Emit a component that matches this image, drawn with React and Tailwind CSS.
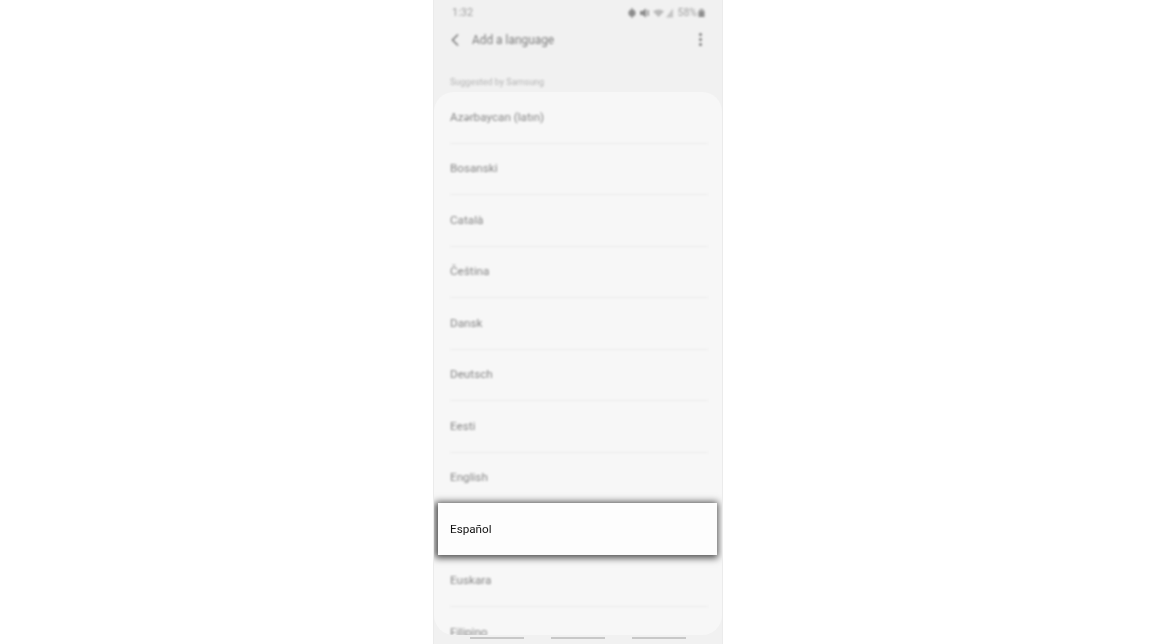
import React from "react";

const font = { fontFamily: '"Roboto","Liberation Sans",sans-serif' };
const before = ["Azərbaycan (latın)", "Bosanski", "Català", "Čeština", "Dansk", "Deutsch", "Eesti", "English"];

function Row({ label, last }) {
  return (
    <div className="h-[51.5px] flex flex-col shrink-0 blur-[0.85px]">
      <div className="flex-1 flex items-center pl-[16px] pt-[1px] text-[11.7px] text-[#868686]">{label}</div>
      {!last && <div className="ml-[16px] mr-[14px] h-px bg-[#ebebeb]" />}
    </div>
  );
}

export default function App() {
  return (
    <div className="w-[1156px] h-[644px] bg-white flex justify-center overflow-hidden" style={font}>
      <div className="w-[290px] h-[644px] bg-[#f1f1f1] flex flex-col overflow-hidden border-x border-[#ebebeb]">
        <div className="h-[25px] flex items-center justify-between pl-[18px] pr-[17px] pt-[1px] blur-[0.85px] shrink-0">
          <span className="text-[11px] text-[#a0a0a0]">1:32</span>
          <div className="flex items-center text-[#8c8c8c] -mt-[1px]">
            <svg width="46" height="10" viewBox="0 0 46 10" fill="currentColor" className="mr-[4px]">
              <circle cx="4" cy="5" r="3.600" />
              <rect x="3.400" y="0" width="1.200" height="10" />
              <path d="M12 3h2.500l3.500-2.500v9l-3.500-2.500H12z" />
              <path d="M20 2v6" stroke="currentColor" strokeWidth="1.500" />
              <path d="M25 3.500q6-4 11 0l-5.500 5.500z" opacity="0.55" />
              <path d="M45 0.500V9.500H38z" opacity="0.45" />
            </svg>
            <span className="text-[10.5px] text-[#a0a0a0]">58%</span>
            <svg width="7" height="9" viewBox="0 0 7 9" fill="currentColor" className="ml-[1px]">
              <rect x="0.500" y="3" width="6" height="6" />
              <path d="M2 3V1.500h3V3" fill="none" stroke="currentColor" />
            </svg>
          </div>
        </div>
        <div className="h-[30px] flex items-center pl-[16px] pr-[20px] pt-[1px] blur-[0.85px] shrink-0">
          <svg width="10" height="14" viewBox="0 0 10 14" fill="none" stroke="#7c7c7c" strokeWidth="1.600" className="-mt-[1px]">
            <path d="M8 1.500 2.500 7 8 12.500" />
          </svg>
          <span className="ml-[12px] text-[11.9px] text-[#7e7e7e]">Add a language</span>
          <div className="ml-auto flex flex-col gap-[2px] -mt-[2px]">
            <span className="w-[3px] h-[3px] rounded-full bg-[#7c7c7c]" />
            <span className="w-[3px] h-[3px] rounded-full bg-[#7c7c7c]" />
            <span className="w-[3px] h-[3px] rounded-full bg-[#7c7c7c]" />
          </div>
        </div>
        <div className="h-[37px] flex items-end pb-[3px] pl-[16px] text-[9px] text-[#b4b4b4] blur-[0.85px] shrink-0">Suggested by Samsung</div>
        <div className="flex-1 min-h-0 bg-[#f7f7f7] rounded-[20px] flex flex-col overflow-hidden">
          {before.map((l) => <Row key={l} label={l} />)}
          <div className="h-[52px] shrink-0 -mt-px ml-[4px] mr-[5px] bg-[#fdfdfd] flex items-center pl-[12px] pt-[1px] text-[11.7px] text-[#111] shadow-[-1px_1px_7px_2px_rgba(0,0,0,0.7)] relative z-10 blur-[0.3px]">Español</div>
          <Row label="Euskara" />
          <Row label="Filipino" last />
        </div>
        <div className="h-[9px] shrink-0 flex justify-center items-center gap-[27px] pb-[3px] blur-[0.4px]">
          <span className="w-[54px] h-[2px] bg-[#c8c8c8]" />
          <span className="w-[54px] h-[2px] bg-[#c8c8c8]" />
          <span className="w-[54px] h-[2px] bg-[#c8c8c8]" />
        </div>
      </div>
    </div>
  );
}
